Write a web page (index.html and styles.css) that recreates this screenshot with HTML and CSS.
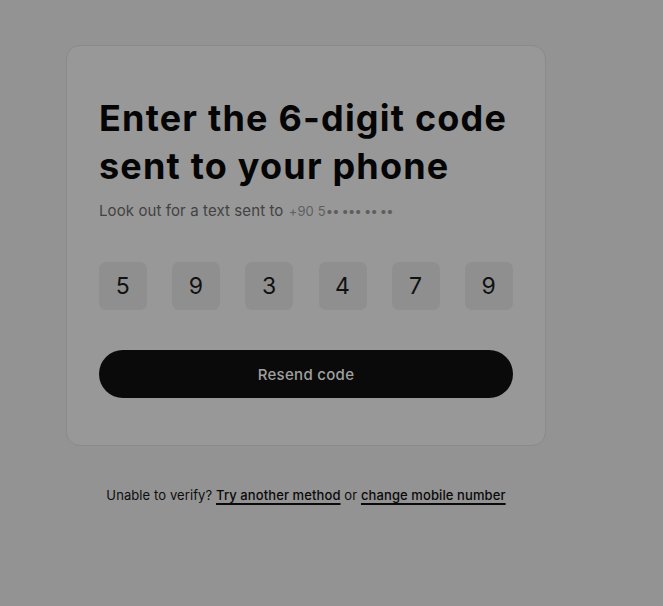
FILE: index.html
```html
<!DOCTYPE html>
<html lang="en">
<head>
<meta charset="utf-8">
<title>Verify your phone</title>
<link rel="stylesheet" href="styles.css">
</head>
<body>
<main class="page">
  <section class="card">
    <h1 class="title">Enter the 6-digit code sent to your phone</h1>
    <p class="subtitle">Look out for a text sent to <span class="phone">+90 5<span class="dots">•• ••• •• ••</span></span></p>
    <div class="otp">
      <div class="otp-box">5</div>
      <div class="otp-box">9</div>
      <div class="otp-box">3</div>
      <div class="otp-box">4</div>
      <div class="otp-box">7</div>
      <div class="otp-box">9</div>
    </div>
    <button class="resend" type="button">Resend code</button>
  </section>
  <p class="footer">Unable to verify? <a class="link" href="#">Try another method</a> or <a class="link" href="#">change mobile number</a></p>
</main>
</body>
</html>
```

FILE: styles.css
```css
html, body {
  margin: 0;
  padding: 0;
}
body {
  background: #939393;
  font-family: Inter, "Noto Sans", sans-serif;
  color: #0a0a0a;
  min-height: 606px;
}
.page {
  width: 480px;
  margin-left: 66px;
  padding-top: 45px;
}
.card {
  box-sizing: border-box;
  width: 480px;
  background: #989898;
  border: 1px solid #8a8a8a;
  border-radius: 14px;
  padding: 48px 32px 47px 32px;
}
.title {
  margin: 0;
  font-size: 36px;
  line-height: 48px;
  font-weight: 700;
  letter-spacing: 1.2px;
  color: #050505;
}
.subtitle {
  margin: 11px 0 0 0;
  font-size: 15px;
  line-height: 20px;
  letter-spacing: 0.1px;
  color: #424242;
}
.phone {
  margin-left: 1px;
  font-size: 13px;
  line-height: 1;
  color: #5e5e5e;
}
.dots {
  letter-spacing: -0.8px;
}
.otp {
  margin-top: 41px;
  display: flex;
  justify-content: space-between;
}
.otp-box {
  width: 48px;
  height: 48px;
  border-radius: 7px;
  background: #8f8f8f;
  display: flex;
  align-items: center;
  justify-content: center;
  font-size: 23px;
  letter-spacing: 0.5px;
  color: #111;
}
.resend {
  display: block;
  width: 100%;
  height: 48px;
  margin-top: 40px;
  border: none;
  border-radius: 24px;
  background: #0a0a0a;
  color: #a0a0a0;
  font-family: Inter, "Noto Sans", sans-serif;
  font-size: 15px;
  font-weight: 500;
  letter-spacing: 0.3px;
}
.footer {
  margin: 40px 0 0 0;
  text-align: center;
  font-size: 13px;
  line-height: 18px;
  letter-spacing: 0.1px;
  color: #0d0d0d;
}
.link {
  color: #0a0a0a;
  font-weight: 500;
  text-decoration: underline;
  text-underline-offset: 3px;
  text-decoration-thickness: 1.5px;
}
```
